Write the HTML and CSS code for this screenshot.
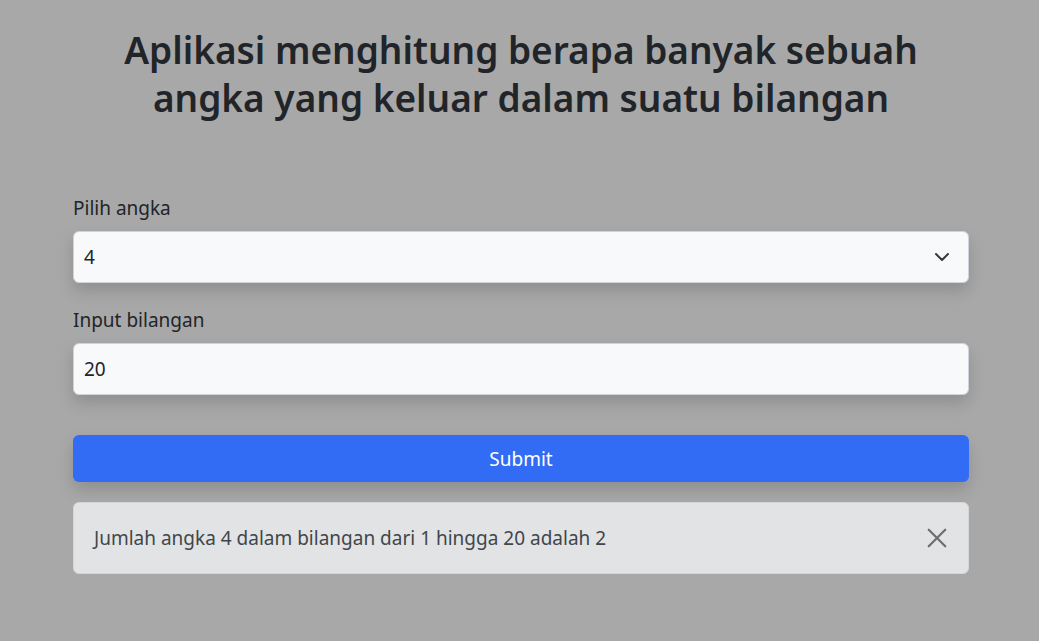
FILE: index.html
```html
<!DOCTYPE html>
<html lang="id">
<head>
<meta charset="utf-8">
<title>Aplikasi</title>
<link rel="stylesheet" href="styles.css">
</head>
<body>
<main class="container">
  <h1 class="title">Aplikasi menghitung berapa banyak sebuah<br>angka yang keluar dalam suatu bilangan</h1>
  <form class="form">
    <div class="field">
      <label class="label">Pilih angka</label>
      <div class="select">
        <span>4</span>
        <svg class="chev" width="16" height="16" viewBox="0 0 16 16"><path d="M2 5l6 6 6-6" fill="none" stroke="#343a40" stroke-width="2" stroke-linecap="round" stroke-linejoin="round"/></svg>
      </div>
    </div>
    <div class="field">
      <label class="label">Input bilangan</label>
      <div class="input">20</div>
    </div>
    <button class="btn" type="button">Submit</button>
    <div class="alert">
      <span>Jumlah angka 4 dalam bilangan dari 1 hingga 20 adalah 2</span>
      <svg class="close" width="22" height="22" viewBox="0 0 16 16"><path d="M2 2l12 12M14 2L2 14" stroke="#6c6d6f" stroke-width="1.6" stroke-linecap="round"/></svg>
    </div>
  </form>
</main>
</body>
</html>
```
FILE: styles.css
```css
html, body { margin: 0; padding: 0; }
body {
  background: #a8a8a8;
  font-family: "Noto Sans", "Open Sans", sans-serif;
  color: #212529;
  height: 641px;
  padding-left: 3px;
  box-sizing: border-box;
}
.container {
  width: 896px;
  margin: 0 auto;
  padding-top: 26px;
}
.title {
  margin: 0 0 72px;
  text-align: center;
  font-size: 37px;
  font-weight: 600;
  line-height: 48px;
  color: #212529;
}
.form { display: flex; flex-direction: column; }
.field { display: flex; flex-direction: column; }
.field + .field { margin-top: 23px; }
.label { font-size: 19px; line-height: 28px; margin-bottom: 9px; color: #212529; }
.select, .input {
  height: 52px;
  box-sizing: border-box;
  background: #f8f9fa;
  border: 1px solid #ced4da;
  border-radius: 6px;
  box-shadow: 0 8px 16px rgba(0,0,0,0.15);
  display: flex;
  align-items: center;
  padding: 0 10px;
  font-size: 19px;
  color: #212529;
}
.select { justify-content: space-between; padding-right: 18px; }
.btn {
  margin-top: 40px;
  height: 47px;
  border: none;
  border-radius: 6px;
  background: #326cf4;
  color: #fff;
  font-family: inherit;
  font-size: 19px;
  box-shadow: 0 8px 16px rgba(0,0,0,0.15);
}
.alert {
  margin-top: 20px;
  height: 72px;
  box-sizing: border-box;
  background: #e2e3e5;
  border: 1px solid #d3d6d8;
  border-radius: 6px;
  display: flex;
  align-items: center;
  justify-content: space-between;
  padding: 0 20px;
  font-size: 19px;
  color: #41464b;
}
.close { display: block; }
```
